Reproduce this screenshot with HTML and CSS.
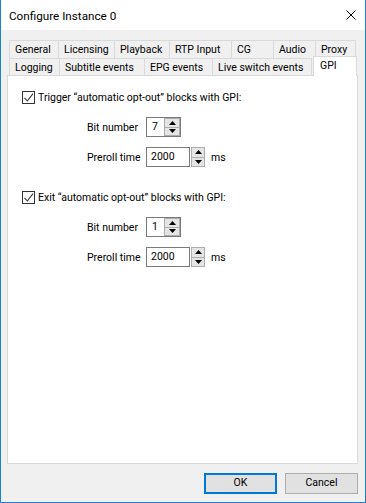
FILE: index.html
```html
<!DOCTYPE html>
<html>
<head>
<meta charset="utf-8">
<link rel="stylesheet" href="styles.css">
</head>
<body>
<div class="window">
  <div class="titlebar">
    <span class="title">Configure Instance 0</span>
    <span class="close"><svg width="10" height="10" viewBox="0 0 10 10"><path d="M0.5 0.5 L9.5 9.5 M9.5 0.5 L0.5 9.5" stroke="#000" stroke-width="1"/></svg></span>
  </div>
  <div class="body">
    <div class="tabs">
      <div class="tabrow row1">
        <div class="tab t-general">General</div>
        <div class="tab t-licensing">Licensing</div>
        <div class="tab t-playback">Playback</div>
        <div class="tab t-rtp">RTP Input</div>
        <div class="tab t-cg">CG</div>
        <div class="tab t-audio">Audio</div>
        <div class="tab t-proxy">Proxy</div>
      </div>
      <div class="tabrow row2">
        <div class="tab t-logging">Logging</div>
        <div class="tab t-subtitle">Subtitle events</div>
        <div class="tab t-epg">EPG events</div>
        <div class="tab t-live">Live switch events</div>
        <div class="tab t-gpi selected">GPI</div>
      </div>
    </div>
    <div class="panel">
      <div class="section">
        <div class="check">
          <span class="box"><svg width="11" height="11" viewBox="0 0 11 11"><path d="M1.5 5.8 L4.3 9 L10 1.6" fill="none" stroke="#333" stroke-width="1.1"/></svg></span>
          <span class="check-label">Trigger “automatic opt-out” blocks with GPI:</span>
        </div>
        <div class="field field-first">
          <span class="flabel">Bit number</span>
          <div class="combo">
            <span class="val">7</span>
            <div class="spin inner">
              <div class="sbtn"><svg width="7" height="4" viewBox="0 0 7 4"><polygon points="3.5,0 7,4 0,4" fill="#000"/></svg></div>
              <div class="sbtn"><svg width="7" height="4" viewBox="0 0 7 4"><polygon points="0,0 7,0 3.5,4" fill="#000"/></svg></div>
            </div>
          </div>
        </div>
        <div class="field field-second">
          <span class="flabel">Preroll time</span>
          <div class="numbox">2000</div>
          <div class="spin outer">
            <div class="sbtn"><svg width="7" height="4" viewBox="0 0 7 4"><polygon points="3.5,0 7,4 0,4" fill="#000"/></svg></div>
            <div class="sbtn"><svg width="7" height="4" viewBox="0 0 7 4"><polygon points="0,0 7,0 3.5,4" fill="#000"/></svg></div>
          </div>
          <span class="unit">ms</span>
        </div>
      </div>
      <div class="section section-next">
        <div class="check">
          <span class="box"><svg width="11" height="11" viewBox="0 0 11 11"><path d="M1.5 5.8 L4.3 9 L10 1.6" fill="none" stroke="#333" stroke-width="1.1"/></svg></span>
          <span class="check-label">Exit “automatic opt-out” blocks with GPI:</span>
        </div>
        <div class="field field-first">
          <span class="flabel">Bit number</span>
          <div class="combo">
            <span class="val">1</span>
            <div class="spin inner">
              <div class="sbtn"><svg width="7" height="4" viewBox="0 0 7 4"><polygon points="3.5,0 7,4 0,4" fill="#000"/></svg></div>
              <div class="sbtn"><svg width="7" height="4" viewBox="0 0 7 4"><polygon points="0,0 7,0 3.5,4" fill="#000"/></svg></div>
            </div>
          </div>
        </div>
        <div class="field field-second">
          <span class="flabel">Preroll time</span>
          <div class="numbox">2000</div>
          <div class="spin outer">
            <div class="sbtn"><svg width="7" height="4" viewBox="0 0 7 4"><polygon points="3.5,0 7,4 0,4" fill="#000"/></svg></div>
            <div class="sbtn"><svg width="7" height="4" viewBox="0 0 7 4"><polygon points="0,0 7,0 3.5,4" fill="#000"/></svg></div>
          </div>
          <span class="unit">ms</span>
        </div>
      </div>
    </div>
    <div class="buttons">
      <button class="btn default">OK</button>
      <button class="btn">Cancel</button>
    </div>
  </div>
</div>
</body>
</html>
```

FILE: styles.css
```css
* { box-sizing: border-box; }
html, body { margin: 0; padding: 0; background: #fff; }
body {
  font-family: Roboto, "Liberation Sans", sans-serif;
  font-size: 10.5px;
  color: #000;
}
.window {
  width: 366px;
  height: 503px;
  border: 1px solid #1883d7;
  border-top: none;
  display: flex;
  flex-direction: column;
  background: #f0f0f0;
}
.titlebar {
  height: 30px;
  flex: none;
  background: #fff;
  display: flex;
  align-items: center;
  justify-content: space-between;
  padding-left: 8px;
}
.title {
  font-size: 11.7px;
  padding-top: 2px;
}
.close {
  width: 30px;
  height: 30px;
  display: flex;
  align-items: center;
  justify-content: center;
  margin-right: -1px;
}
.close svg { display: block; }
.body {
  flex: 1;
  padding: 10px 7px 0 6px;
  display: flex;
  flex-direction: column;
}
.tabs { margin-left: 2px; flex: none; }
.tabrow { display: flex; }
.row1 { height: 18px; }
.row2 { height: 17px; align-items: flex-start; }
.tab {
  border: 1px solid #d9d9d9;
  border-bottom: none;
  background: #f0f0f0;
  height: 100%;
  margin-left: -1px;
  padding: 1px 0 0 5px;
  line-height: 16px;
  white-space: nowrap;
  overflow: hidden;
}
.tab:first-child { margin-left: 0; }
.t-general { width: 50px; }
.t-licensing { width: 57px; }
.t-playback { width: 56px; }
.t-rtp { width: 63px; }
.t-cg { width: 43px; }
.t-audio { width: 43px; }
.t-proxy { width: 41px; }
.t-logging { width: 51px; }
.t-subtitle { width: 86px; }
.t-epg { width: 69px; }
.t-live { width: 100px; }
.t-gpi.selected {
  width: 44px;
  height: 20px;
  margin-left: 1px;
  margin-top: -2px;
  padding-left: 6px;
  background: #fff;
  position: relative;
  z-index: 1;
}
.panel {
  flex: none;
  height: 389px;
  border: 1px solid #d9d9d9;
  background: #fff;
  padding: 15px 0 0 14px;
}
.check {
  display: flex;
  align-items: center;
  height: 13px;
}
.box {
  width: 13px;
  height: 13px;
  border: 1px solid #333;
  background: #fff;
  flex: none;
}
.box svg { display: block; }
.check-label { margin-left: 3px; white-space: nowrap; }
.field {
  display: flex;
  align-items: center;
  height: 20px;
  margin-left: 65px;
}
.field-first { margin-top: 13px; }
.field-second { margin-top: 10px; }
.section-next { margin-top: 24px; }
.flabel { width: 59px; flex: none; }
.combo {
  width: 35px;
  height: 20px;
  border: 1px solid #7a7a7a;
  background: #fff;
  display: flex;
  justify-content: space-between;
}
.val { padding-left: 5px; line-height: 18px; }
.spin { display: flex; flex-direction: column; }
.spin.inner { width: 16px; height: 18px; }
.spin.outer { width: 14px; height: 20px; margin-left: 1px; }
.sbtn {
  flex: 1;
  border: 1px solid #adadad;
  background: #e5e5e5;
  display: flex;
  align-items: center;
  justify-content: center;
}
.sbtn + .sbtn { border-top: none; }
.sbtn svg { display: block; }
.numbox {
  width: 44px;
  height: 20px;
  border: 1px solid #7a7a7a;
  background: #fff;
  padding-left: 4px;
  line-height: 18px;
}
.unit { margin-left: 6px; }
.buttons {
  flex: none;
  display: flex;
  justify-content: flex-end;
  gap: 8px;
  margin-top: 9px;
}
.btn {
  width: 73px;
  height: 21px;
  padding: 0;
  margin: 0;
  background: #e1e1e1;
  border: 1px solid #adadad;
  font-family: inherit;
  font-size: 10.5px;
  color: #000;
  line-height: 1;
}
.btn.default { border: 2px solid #0078d7; }
```
